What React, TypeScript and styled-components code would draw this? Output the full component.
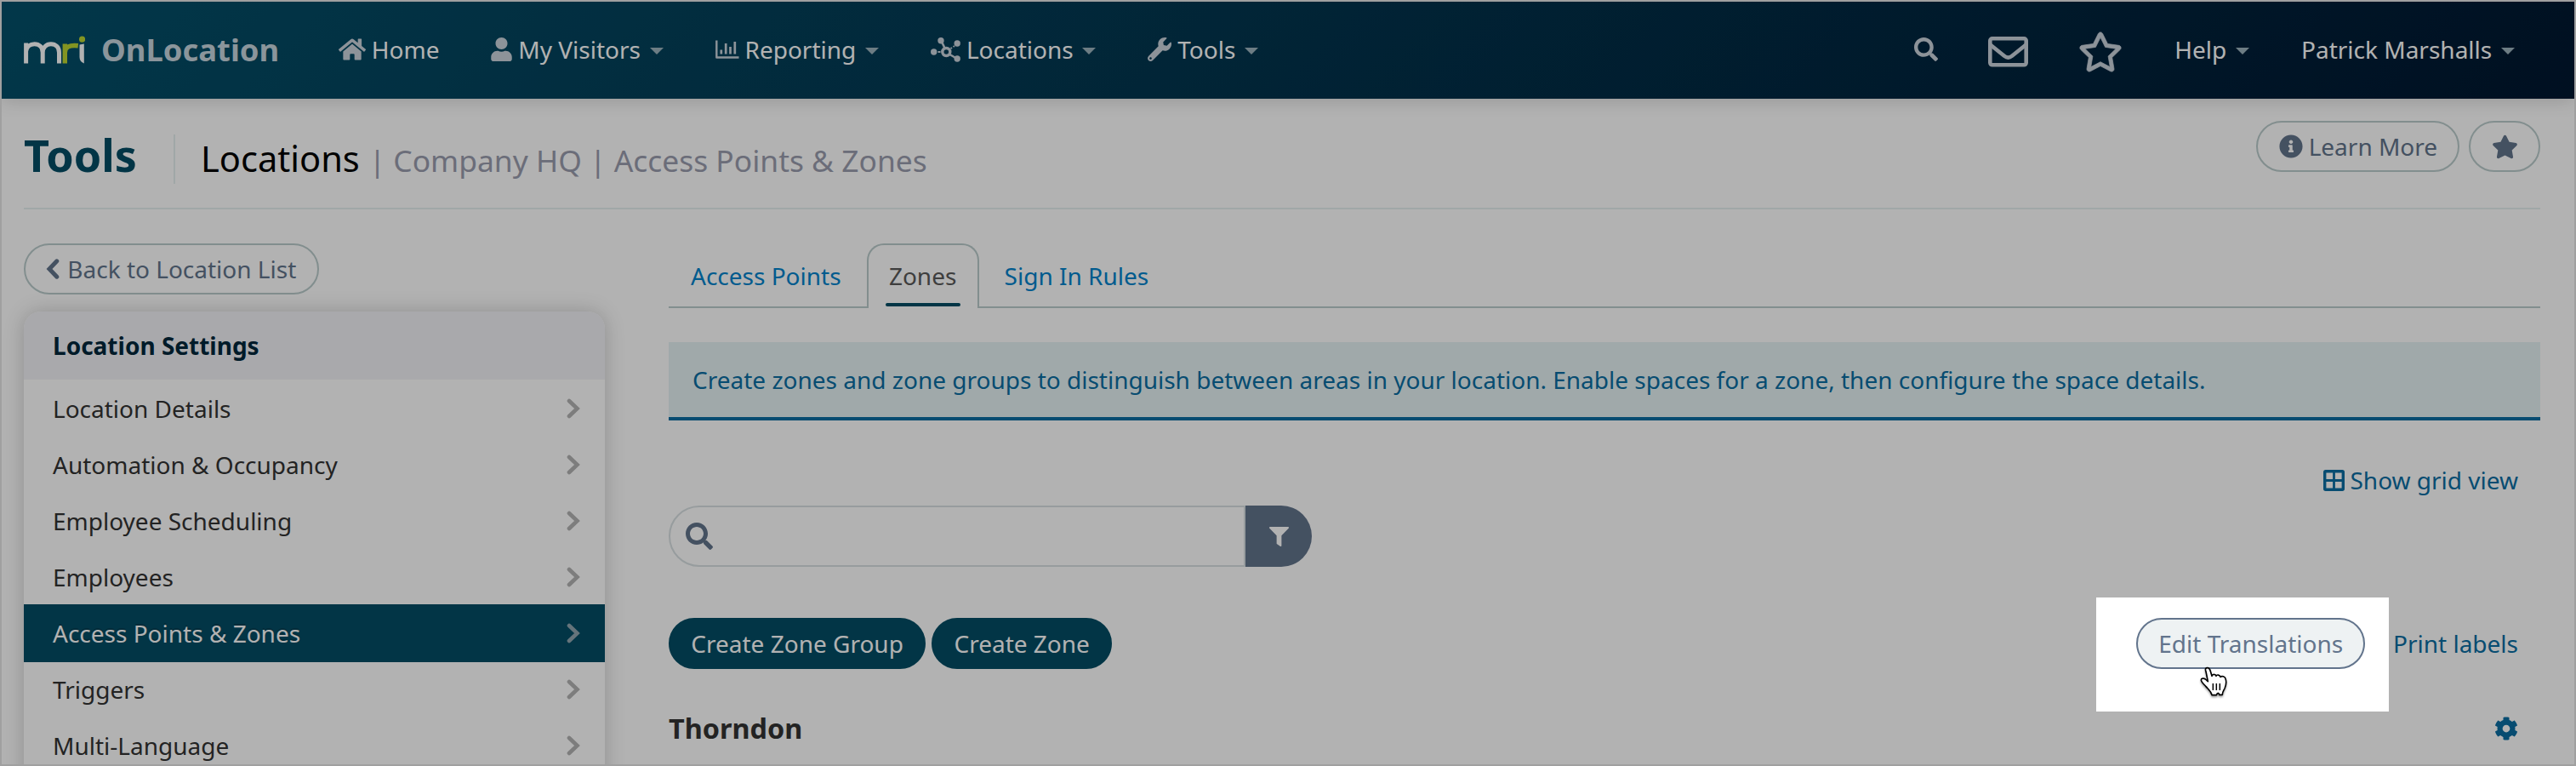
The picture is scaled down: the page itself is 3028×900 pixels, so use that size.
import styled, { createGlobalStyle } from "styled-components";
import {
    FaCog,
    FaFilter,
    FaHome,
    FaInfoCircle,
    FaRegStar,
    FaSearch,
    FaStar,
    FaUser,
    FaWrench,
} from "react-icons/fa";

interface ActiveProps {
    $active?: boolean;
}

interface ButtonProps {
    $variant?: "primary" | "outline" | "hover";
}

const GlobalStyle = createGlobalStyle`
    * {
        box-sizing: border-box;
    }
    body {
        margin: 0;
        font-family: "Noto Sans", "Open Sans", sans-serif;
        font-size: 28px;
        color: #333333;
        background-color: #ffffff;
    }
    svg {
        display: block;
        flex-shrink: 0;
    }
`;

const Page = styled.div`
    display: flex;
    flex-direction: column;
    width: 3028px;
    height: 900px;
    overflow: hidden;
    border: 2px solid #a0a0a0;
    background-color: #ffffff;
`;

const Header = styled.header`
    display: flex;
    align-items: center;
    justify-content: space-between;
    flex-shrink: 0;
    height: 114px;
    padding: 0 70px 2px 26px;
    background: linear-gradient(135deg, #04506a 0%, #001730 100%);
    box-shadow: 0 2px 20px rgba(0, 0, 0, 0.16);
    color: #ffffff;
`;

const HeaderSide = styled.div`
    display: flex;
    align-items: center;
    height: 100%;
`;

const Brand = styled.div`
    display: flex;
    align-items: center;
    width: 370px;
    gap: 19px;
    font-size: 36.4px;
    font-weight: bold;
    color: #c8d6df;
`;

const Nav = styled.nav`
    display: flex;
    gap: 61px;
`;

const NavItem = styled.div`
    display: flex;
    align-items: center;
    gap: 6.8px;
    white-space: nowrap;
    svg {
        color: #cad3dc;
    }
`;

const UserIcon = styled(FaUser)`
    width: 25px;
    height: 28px;
`;

const Caret = styled.span`
    margin-left: 4px;
    margin-top: 3px;
    border-top: 8px solid #9db3bd;
    border-left: 8px solid transparent;
    border-right: 8px solid transparent;
`;

const HeaderIcons = styled.div`
    display: flex;
    align-items: center;
    gap: 59px;
    margin-right: 61px;
    color: #cad3dc;
`;

const FavouriteIcon = styled(FaRegStar)`
    margin-top: 5px;
    stroke: currentColor;
    stroke-width: 8px;
`;

const MailIcon = styled.svg`
    margin-top: 5px;
`;

const TitleBar = styled.div`
    display: flex;
    justify-content: space-between;
    flex-shrink: 0;
    height: 130px;
    margin: 0 40px 0 26px;
    border-bottom: 2px solid #e6f0f0;
`;

const Titles = styled.div`
    display: flex;
    align-items: baseline;
    padding-top: 30px;
    height: 128px;
    white-space: nowrap;
`;

const Title = styled.h1`
    margin: 0;
    width: 176px;
    font-size: 52px;
    font-weight: bold;
    color: #044d65;
`;

const Breadcrumb = styled.h2`
    margin: 0;
    padding-left: 30px;
    border-left: 2px solid #e6f0f0;
    line-height: 56px;
    font-size: 41.6px;
    font-weight: normal;
    color: #000000;
    small {
        font-size: 35.4px;
        color: #9a9dae;
    }
`;

const TitleActions = styled.div`
    display: flex;
    gap: 11px;
    padding-top: 26px;
`;

const Button = styled.button<ButtonProps>`
    display: flex;
    align-items: center;
    height: 60px;
    padding: 0 24.3px;
    gap: 7px;
    border: 2px solid
        ${({ $variant }) =>
            $variant === "primary" ? "#044d65" : $variant === "hover" ? "#62748c" : "#bacccc"};
    border-radius: 30px;
    background-color: ${({ $variant }) =>
        $variant === "primary" ? "#044d65" : $variant === "hover" ? "#eef2f3" : "#ffffff"};
    color: ${({ $variant }) => ($variant === "primary" ? "#ffffff" : "#62748c")};
    font-family: inherit;
    font-size: 28px;
    white-space: nowrap;
`;

const Body = styled.div`
    display: flex;
    align-items: flex-start;
    flex: 1;
    min-height: 0;
    padding: 40px 40px 0 26px;
    gap: 75px;
`;

const Sidebar = styled.aside`
    display: flex;
    flex-direction: column;
    align-items: flex-start;
    flex-shrink: 0;
    width: 683px;
    gap: 20px;
`;

const Panel = styled.div`
    width: 100%;
    height: 600px;
    border-radius: 20px;
    box-shadow: 0 0 24px rgba(0, 0, 0, 0.2);
    background-color: #ffffff;
    overflow: hidden;
`;

const PanelTitle = styled.div`
    display: flex;
    align-items: center;
    height: 80px;
    padding-left: 34px;
    background-color: #f3f3f6;
    color: #00283c;
    font-weight: bold;
`;

const PanelItem = styled.div<ActiveProps>`
    display: flex;
    align-items: center;
    justify-content: space-between;
    height: 68px;
    margin-bottom: -2px;
    padding: 0 29px 0 34px;
    background-color: ${({ $active }) => ($active ? "#044d65" : "transparent")};
    color: ${({ $active }) => ($active ? "#ffffff" : "#333333")};
    text-shadow: ${({ $active }) => ($active ? "0 -2px 0 rgba(0, 0, 0, 0.2)" : "none")};
    svg {
        color: ${({ $active }) => ($active ? "#91a6b0" : "#b3b3b3")};
    }
`;

const Main = styled.main`
    flex: 1;
    min-width: 0;
`;

const Tabs = styled.div`
    display: flex;
    height: 76px;
    gap: 4px;
    box-shadow: inset 0 -2px 0 #bacccc;
`;

const Tab = styled.div<ActiveProps>`
    display: flex;
    flex-direction: column;
    align-items: center;
    justify-content: center;
    padding: 0 24px 2px;
    border: 2px solid ${({ $active }) => ($active ? "#bacccc" : "transparent")};
    border-bottom: none;
    border-radius: 20px 20px 0 0;
    background-color: ${({ $active }) => ($active ? "#ffffff" : "transparent")};
    color: ${({ $active }) => ($active ? "#5a5a5a" : "#0083cc")};
`;

const TabUnderline = styled.span`
    width: 88px;
    height: 4px;
    margin: 13px -4px -17px;
    border-radius: 2px;
    background-color: #044d65;
`;

const Alert = styled.div`
    display: flex;
    align-items: center;
    height: 92px;
    margin-top: 40px;
    padding: 0 28px;
    border-bottom: 4px solid #0b6ea3;
    background-color: #e5f3f4;
    color: #0b6ea3;
`;

const ViewRow = styled.div`
    display: flex;
    justify-content: flex-end;
    height: 38px;
    margin-top: 51px;
    padding-right: 26px;
`;

const Link = styled.a`
    display: flex;
    align-items: center;
    gap: 6px;
    color: #0b6ea3;
`;

const SearchBox = styled.div`
    display: flex;
    width: 756px;
    height: 72px;
    margin-top: 11px;
`;

const SearchField = styled.div`
    display: flex;
    align-items: center;
    flex: 1;
    padding-left: 18px;
    border: 2px solid #d8e0e2;
    border-radius: 36px 0 0 36px;
    color: #62748c;
`;

const FilterButton = styled.div`
    display: flex;
    align-items: center;
    justify-content: center;
    width: 78px;
    border-radius: 0 36px 36px 0;
    background-color: #62748c;
    color: #ffffff;
`;

const ActionRow = styled.div`
    display: flex;
    justify-content: space-between;
    margin-top: 60px;
    padding-right: 26px;
`;

const ActionGroup = styled.div<{ $gap: number }>`
    display: flex;
    gap: ${({ $gap }) => $gap}px;
`;

const Highlighted = styled.div`
    position: relative;
`;

/* dims everything outside of the highlighted button */
const Spotlight = styled.div`
    position: absolute;
    z-index: 10;
    top: -24px;
    left: -47px;
    width: 344px;
    height: 134px;
    box-shadow: 0 0 0 4000px rgba(0, 0, 0, 0.3);
    pointer-events: none;
`;

const Pointer = styled.svg`
    position: absolute;
    z-index: 11;
    top: 57px;
    left: 74px;
    filter: drop-shadow(0 2px 1px rgba(0, 0, 0, 0.35));
`;

const GroupRow = styled.div`
    display: flex;
    align-items: center;
    justify-content: space-between;
    height: 44px;
    margin-top: 47px;
    padding-right: 26px;
    font-size: 32.4px;
    font-weight: bold;
    svg {
        margin-top: 2px;
        color: #0b6ea3;
    }
`;

const Logo = () => (
    <svg width="72" height="33" viewBox="0 0 72 33" fill="none">
        <path
            d="M2.6 32.5V8.5M2.6 18C3.5 12.5 7.5 9.7 12.5 9.7c5.6 0 9.7 3.7 9.7 10v12.8M22.2 19.7c0-6 4.2-10 9.7-10s9.6 3.7 9.6 10v12.8"
            stroke="#ffffff"
            strokeWidth="5"
        />
        <path d="M48.3 32.5V9.5M48.3 20c0-6.5 5-9.5 15.5-8.3" stroke="#bcd532" strokeWidth="5.4" />
        <path d="M65.5 10.5l5.3-1v23c-4-1.6-5.3-4.5-5.3-8z" fill="#ffffff" />
        <circle cx="68.6" cy="4.2" r="3.6" fill="#bcd532" />
    </svg>
);

const ChartIcon = () => (
    <svg width="28" height="22" viewBox="0 0 28 22" fill="none" stroke="currentColor">
        <path d="M1.3 0.5V20.5H27.5" strokeWidth="2.4" strokeLinejoin="round" />
        <path d="M6.8 11.5v5M12.2 4v12.5M17.5 8v8.5M22.8 2v14.5" strokeWidth="2.7" />
    </svg>
);

const HubIcon = () => (
    <svg width="35" height="29" viewBox="0 0 35 29" fill="none" stroke="currentColor">
        <circle cx="18.3" cy="17" r="4.5" strokeWidth="3.4" />
        <path d="M16.5 12.5L12.5 4M22.5 20L31 25" strokeWidth="2.6" />
        <path d="M8.5 17h3M23.5 13l1.5-1M26.5 11l1.5-1" strokeWidth="2" />
        <g fill="currentColor" stroke="none">
            <circle cx="12" cy="3.7" r="3.7" />
            <circle cx="31.2" cy="7" r="3.7" />
            <circle cx="3.7" cy="17" r="3.7" />
            <circle cx="31.2" cy="25" r="3.7" />
        </g>
    </svg>
);

const EnvelopeIcon = () => (
    <MailIcon width="47" height="36" viewBox="0 0 47 36" fill="none" stroke="currentColor">
        <rect x="2.3" y="2.3" width="42.4" height="31" rx="2.5" strokeWidth="4.6" />
        <path d="M2.5 9.5L19 22.8q4.5 3.6 9 0L44.5 9.5" strokeWidth="4.6" />
    </MailIcon>
);

const GridIcon = () => (
    <svg width="25" height="25" viewBox="0 0 25 25" fill="none" stroke="currentColor">
        <rect x="1.7" y="1.7" width="21.6" height="21.6" rx="1" strokeWidth="3.4" />
        <path d="M12.5 2v21M2 12.5h21" strokeWidth="2.8" />
    </svg>
);

const ChevronRight = () => (
    <svg width="16" height="24" viewBox="0 0 16 24" fill="none" stroke="currentColor">
        <path d="M3 3l9.5 9L3 21" strokeWidth="4.6" strokeLinecap="round" />
    </svg>
);

const ChevronLeft = () => (
    <svg width="18" height="24" viewBox="0 0 18 24" fill="none" stroke="currentColor">
        <path d="M12.8 2.8L4 12l8.8 9.2" strokeWidth="5" strokeLinecap="round" />
    </svg>
);

const HandPointer = () => (
    <Pointer width="34" height="37" viewBox="-2 -2 102 111">
        <path
            d="M22 16C18 6 22 3 27 3c6 0 9 5 11 12l5 17c2-8 13-8 15 0 2-6 13-5 15 3 5-5 16-1 18 6 4 12 2 24-3 35-4 8-8 12-8 22H69c-1-8-7-8-10 1H43c-3-14-12-20-21-30C13 59 5 52 5 46c0-7 10-7 15-3l9 8z"
            fill="#ffffff"
            stroke="#000000"
            strokeWidth="5"
            strokeLinejoin="round"
        />
        <path d="M47 58v24M59 58v24M71 58v24" stroke="#000000" strokeWidth="4.5" />
    </Pointer>
);

const navItems = [
    { label: "Home", icon: <FaHome size={32} />, caret: false },
    { label: "My Visitors", icon: <UserIcon />, caret: true },
    { label: "Reporting", icon: <ChartIcon />, caret: true },
    { label: "Locations", icon: <HubIcon />, caret: true },
    { label: "Tools", icon: <FaWrench size={28} />, caret: true },
];

const settings = [
    "Location Details",
    "Automation & Occupancy",
    "Employee Scheduling",
    "Employees",
    "Access Points & Zones",
    "Triggers",
    "Multi-Language",
];

const App: React.FC = () => {
    return (
        <>
            <GlobalStyle />
            <Page>
                <Header>
                    <HeaderSide>
                        <Brand>
                            <Logo />
                            OnLocation
                        </Brand>
                        <Nav>
                            {navItems.map((item) => (
                                <NavItem key={item.label}>
                                    {item.icon}
                                    {item.label}
                                    {item.caret && <Caret />}
                                </NavItem>
                            ))}
                        </Nav>
                    </HeaderSide>
                    <HeaderSide>
                        <HeaderIcons>
                            <FaSearch size={28} />
                            <EnvelopeIcon />
                            <FavouriteIcon size={52} />
                        </HeaderIcons>
                        <Nav>
                            <NavItem>
                                Help
                                <Caret />
                            </NavItem>
                            <NavItem>
                                Patrick Marshalls
                                <Caret />
                            </NavItem>
                        </Nav>
                    </HeaderSide>
                </Header>
                <TitleBar>
                    <Titles>
                        <Title>Tools</Title>
                        <Breadcrumb>
                            Locations <small>| Company HQ | Access Points &amp; Zones</small>
                        </Breadcrumb>
                    </Titles>
                    <TitleActions>
                        <Button>
                            <FaInfoCircle size={28} />
                            Learn More
                        </Button>
                        <Button>
                            <FaStar size={31} />
                        </Button>
                    </TitleActions>
                </TitleBar>
                <Body>
                    <Sidebar>
                        <Button>
                            <ChevronLeft />
                            Back to Location List
                        </Button>
                        <Panel>
                            <PanelTitle>Location Settings</PanelTitle>
                            {settings.map((name) => (
                                <PanelItem key={name} $active={name === "Access Points & Zones"}>
                                    {name}
                                    <ChevronRight />
                                </PanelItem>
                            ))}
                        </Panel>
                    </Sidebar>
                    <Main>
                        <Tabs>
                            <Tab>Access Points</Tab>
                            <Tab $active>
                                Zones
                                <TabUnderline />
                            </Tab>
                            <Tab>Sign In Rules</Tab>
                        </Tabs>
                        <Alert>
                            Create zones and zone groups to distinguish between areas in your
                            location. Enable spaces for a zone, then configure the space details.
                        </Alert>
                        <ViewRow>
                            <Link>
                                <GridIcon />
                                Show grid view
                            </Link>
                        </ViewRow>
                        <SearchBox>
                            <SearchField>
                                <FaSearch size={32} />
                            </SearchField>
                            <FilterButton>
                                <FaFilter size={23} />
                            </FilterButton>
                        </SearchBox>
                        <ActionRow>
                            <ActionGroup $gap={7}>
                                <Button $variant="primary">Create Zone Group</Button>
                                <Button $variant="primary">Create Zone</Button>
                            </ActionGroup>
                            <ActionGroup $gap={32.5}>
                                <Highlighted>
                                    <Button $variant="hover">Edit Translations</Button>
                                    <Spotlight />
                                    <HandPointer />
                                </Highlighted>
                                <Link>Print labels</Link>
                            </ActionGroup>
                        </ActionRow>
                        <GroupRow>
                            Thorndon
                            <FaCog size={28} />
                        </GroupRow>
                    </Main>
                </Body>
            </Page>
        </>
    );
};

export default App;
